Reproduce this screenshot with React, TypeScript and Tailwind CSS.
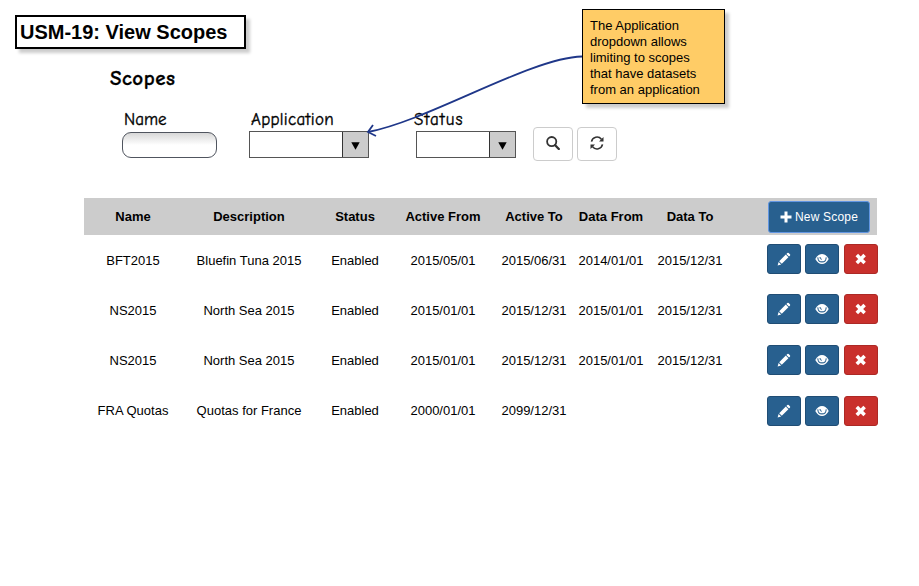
import React from "react";

const sans = "font-['Liberation_Sans',Arial,sans-serif]";
const hand = "font-['Comic_Sans_MS','Comic_Neue',Lato,sans-serif]";

type IconProps = { className?: string };

const SearchIcon = ({ className }: IconProps) => (
  <svg viewBox="0 0 14 14" className={className} fill="none" stroke="#333">
    <circle cx="5.7" cy="5.6" r="4.6" strokeWidth="1.8" />
    <path d="M9.2 9.2l3.6 3.8" strokeWidth="2.3" strokeLinecap="round" />
  </svg>
);

const RefreshIcon = ({ className }: IconProps) => (
  <svg viewBox="0 0 14 14" className={className}>
    <path d="M1.5 5.6A5.6 5.6 0 0 1 11.4 3.2M12.5 8.4A5.6 5.6 0 0 1 2.6 10.8" fill="none" stroke="#333" strokeWidth="1.6" />
    <path d="M13.5 .9V5.4H9ZM.5 13.1V8.6H5Z" fill="#333" />
  </svg>
);

const PencilIcon = () => (
  <svg viewBox="0 0 14 14" className="size-[14px]" fill="#fff">
    <path d="M10.3 1.1q.7-.7 1.4 0l1.2 1.2q.7.7 0 1.4l-.9.9-2.6-2.6zM8.8 2.6l2.6 2.6-6.6 6.6-2.6-2.6zM1.6 9.9l2.5 2.5L.6 13.4z" />
  </svg>
);

const EyeIcon = () => (
  <svg viewBox="0 0 14 14" className="size-[14px]">
    <path d="M.3 7Q3 2 7 2T13.7 7Q11 12 7 12T.3 7Z" fill="#fff" />
    <path d="M2.9 5.4C2.6 8.4 4.4 9.9 7 9.9s4.4-1.5 4.1-4.5" fill="none" stroke="#28608f" strokeWidth="1.1" />
    <path d="M5 5Q4.8 7.2 6.8 7.3" fill="none" stroke="#28608f" strokeWidth="1" />
  </svg>
);

const CrossIcon = () => (
  <svg viewBox="0 0 14 14" className="size-[14px]" stroke="#fff" strokeWidth="3.6">
    <path d="M2.8 3.1l7.8 7.8M10.6 3.1L2.8 10.9" />
  </svg>
);

const PlusIcon = () => (
  <svg viewBox="0 0 12 12" className="size-3" stroke="#fff" strokeWidth="3">
    <path d="M6 .5v11M.5 6h11" />
  </svg>
);

const Dropdown = ({ width }: { width: string }) => (
  <div className={`flex h-[27px] border border-[#555] bg-white ${width}`}>
    <div className="flex-1" />
    <div className="flex w-[26px] items-center justify-center border-l border-[#333] bg-[#ccc]">
      <svg viewBox="0 0 9 8" className="h-2 w-[9px] translate-y-px">
        <path d="M.3 .3h8.4L4.5 7.7z" fill="#000" />
      </svg>
    </div>
  </div>
);

const columns = "grid grid-cols-[98px_134px_78px_98px_84px_70px_88px] items-center text-center";

const headings = ["Name", "Description", "Status", "Active From", "Active To", "Data From", "Data To"];

const rows = [
  ["BFT2015", "Bluefin Tuna 2015", "Enabled", "2015/05/01", "2015/06/31", "2014/01/01", "2015/12/31"],
  ["NS2015", "North Sea 2015", "Enabled", "2015/01/01", "2015/12/31", "2015/01/01", "2015/12/31"],
  ["NS2015", "North Sea 2015", "Enabled", "2015/01/01", "2015/12/31", "2015/01/01", "2015/12/31"],
  ["FRA Quotas", "Quotas for France", "Enabled", "2000/01/01", "2099/12/31", "", ""],
];

const actionOffsets = ["mt-0", "mt-5", "mt-[21px]", "mt-[21px]"];

const blueButton = "flex h-[30px] w-[34px] items-center justify-center rounded-[3px] border border-[#204d74] bg-[#28608f]";

const Actions = ({ offset }: { offset: string }) => (
  <div className={`flex ${offset}`}>
    <button className={blueButton}><PencilIcon /></button>
    <button className={`ml-1 ${blueButton}`}><EyeIcon /></button>
    <button className="ml-[5px] flex h-[30px] w-[34px] items-center justify-center rounded-[3px] border border-[#ac2925] bg-[#c9302c]">
      <CrossIcon />
    </button>
  </div>
);

export default function App() {
  return (
    <div className={`relative h-[586px] w-[919px] overflow-hidden bg-white pt-[15px] text-[13px] text-black ${sans}`}>
      <h1 className="ml-[15px] flex h-[34px] w-[231px] items-center border-2 border-black bg-white pl-[3px] text-[20px] font-bold whitespace-nowrap shadow-[4px_4px_3px_rgba(0,0,0,0.2)]">
        USM-19: View Scopes
      </h1>

      <h2 className={`mt-[15px] ml-[110px] h-[28px] text-[21px] leading-[28px] font-bold tracking-[0.5px] [-webkit-text-stroke:0.3px_black] ${hand}`}>Scopes</h2>

      <div className={`mt-[18px] flex h-[51px] pl-[122px] text-[17px] leading-[20px] [-webkit-text-stroke:0.35px_black] ${hand}`}>
        <div className="w-[127px]">
          <div className="h-[22px] pl-[2px]">Name</div>
          <div className="h-[26px] w-[95px] rounded-[9px] border border-[#50555f] bg-linear-to-b from-[#d8d8d8] to-white to-50%" />
        </div>
        <div className="w-[167px]">
          <div className="h-[21px] pl-[2px] tracking-[0.3px]">Application</div>
          <Dropdown width="w-[120px]" />
        </div>
        <div className="w-[117px]">
          <div className="-ml-[2px] h-[21px] tracking-[1.1px]">Status</div>
          <Dropdown width="w-[100px]" />
        </div>
        <div className="mt-[17px] flex gap-1">
          <button className="flex h-[34px] w-10 items-center justify-center rounded border border-[#ccc] bg-white">
            <SearchIcon className="size-[14px] -translate-y-px" />
          </button>
          <button className="flex h-[34px] w-10 items-center justify-center rounded border border-[#ccc] bg-white">
            <RefreshIcon className="size-[14px] -translate-y-px" />
          </button>
        </div>
      </div>

      <div className="mt-[37px] ml-[84px] flex h-[37px] w-[793px] bg-[#ccc]">
        <div className={`${columns} font-bold`}>
          {headings.map((h) => (
            <div key={h} className="whitespace-nowrap">{h}</div>
          ))}
        </div>
        <button className="mt-[3px] ml-[34px] flex h-8 w-[102px] items-center justify-center gap-[3px] rounded-[3px] border-[1.5px] border-[#6296e2] bg-[#28608f] text-[12px] tracking-[0.2px] whitespace-nowrap text-white">
          <PlusIcon />
          New Scope
        </button>
      </div>

      <div className="ml-[84px] flex">
        <div className="w-[650px] pt-px">
          {rows.map((row, i) => (
            <div key={i} className={`${columns} h-[50px]`}>
              {row.map((cell, j) => (
                <div key={j} className="whitespace-nowrap">{cell}</div>
              ))}
            </div>
          ))}
        </div>
        <div className="ml-[33px] pt-[9px]">
          {actionOffsets.map((offset, i) => (
            <Actions key={i} offset={offset} />
          ))}
        </div>
      </div>

      <svg viewBox="0 0 919 586" className="pointer-events-none absolute inset-0 h-[586px] w-[919px]" fill="none" stroke="#1f3789" strokeWidth="1.8">
        <path d="M582 56.5C530 58 430 120 368 132" />
        <path d="M373 125L368 132L376 136" />
      </svg>
      <div className="absolute top-[9px] left-[582px] h-[95px] w-[143px] border border-black bg-[#fc6] pt-2 pl-[7px] leading-4 whitespace-nowrap shadow-[4px_4px_3px_rgba(0,0,0,0.2)]">
        The Application<br />dropdown allows<br />limiting to scopes<br />that have datasets<br />from an application
      </div>
    </div>
  );
}
